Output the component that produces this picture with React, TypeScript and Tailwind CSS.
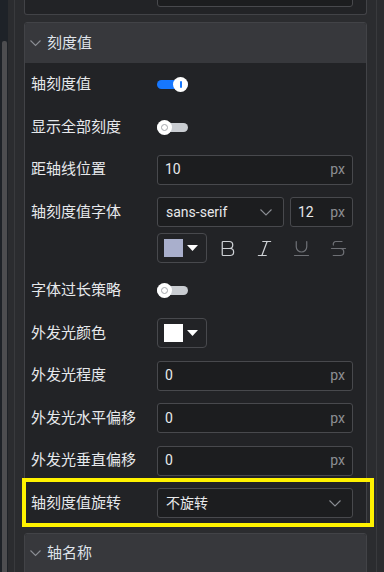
import React from "react";
import { Bold, Italic, Underline, Strikethrough } from "lucide-react";

function Chevron({ color = "#8b8e94" }: { color?: string }) {
  return (
    <svg width="12" height="7" viewBox="0 0 12 7" fill="none" className="shrink-0">
      <polyline points="0.5,0.5 6,6 11.5,0.5" stroke={color} strokeWidth="1.1" />
    </svg>
  );
}

function SectionHeader({ title }: { title: string }) {
  return (
    <div className="h-[40px] bg-[#37383c] rounded-t-[2px] flex items-center pl-[5px]">
      <svg width="11" height="7" viewBox="0 0 11 7" fill="none" className="shrink-0">
        <polyline points="0.5,0.5 5.5,5.5 10.5,0.5" stroke="#8b8e94" strokeWidth="1.1" />
      </svg>
      <span className="ml-[6px] text-[15px] text-[#dfe3ea] leading-none">{title}</span>
    </div>
  );
}

function Toggle({ on }: { on: boolean }) {
  return (
    <div className="relative w-[31px] h-[15px] flex items-center">
      <div className={on ? "w-full h-[9px] rounded-full bg-[#1677ff]" : "w-full h-[9px] rounded-full bg-[#c9ccd1]"} />
      <div
        className={
          on
            ? "absolute top-0 right-0 w-[15px] h-[15px] rounded-full bg-white flex items-center justify-center"
            : "absolute top-0 left-0 w-[15px] h-[15px] rounded-full bg-white flex items-center justify-center"
        }
      >
        {on ? (
          <div className="w-[2px] h-[7px] bg-[#1677ff] rounded-[1px]" />
        ) : (
          <div className="w-[7px] h-[7px] rounded-full border-[1.5px] border-[#a3a6ab]" />
        )}
      </div>
    </div>
  );
}

function NumInput({ value, wide = true, unit = true }: { value: string; wide?: boolean; unit?: boolean }) {
  return (
    <div
      className={
        (wide ? "w-[196px] " : "w-[63px] ") +
        "h-[30px] shrink-0 border border-[#48494d] rounded-[3px] bg-[#1c1d1f] flex items-center justify-between pl-[7px] pr-[7px] text-[14px]"
      }
    >
      <span className="text-[#e8e9eb]">{value}</span>
      {unit && <span className="text-[#8d8f93]">px</span>}
    </div>
  );
}

function Select({ value, width }: { value: string; width: string }) {
  return (
    <div
      className={
        width +
        " h-[30px] shrink-0 border border-[#48494d] rounded-[3px] bg-[#1c1d1f] flex items-center justify-between pl-[8px] pr-[11px]"
      }
    >
      <span className="text-[#e8e9eb] text-[14px]">{value}</span>
      <Chevron />
    </div>
  );
}

function ColorButton({ color }: { color: string }) {
  return (
    <div className="w-[50px] h-[30px] shrink-0 border border-[#48494d] rounded-[4px] flex items-center pl-[6px]">
      <div className="w-[19px] h-[18px]" style={{ background: color }} />
      <svg width="11" height="6" viewBox="0 0 11 6" className="ml-[4px]">
        <polygon points="0,0 11,0 5.5,6" fill="#ffffff" />
      </svg>
    </div>
  );
}

function Row({ label, children }: { label: string; children: React.ReactNode }) {
  return (
    <div className="flex items-center h-[30px]">
      <div className="w-[126px] shrink-0 text-[15px] text-[#e6e8eb] leading-none">{label}</div>
      {children}
    </div>
  );
}

export default function App() {
  return (
    <div className="w-[384px] h-[572px] overflow-hidden flex bg-[#2b2c2f] font-['Roboto','Noto_Sans_CJK_SC',sans-serif]">
      <div className="w-[8px] shrink-0 bg-[#1e2228] pt-[41px] pl-[2px]">
        <div className="w-[5px] h-full bg-[#4d4d50] rounded-t-[2px]" />
      </div>
      <div className="ml-[6px] w-[363px] shrink-0 border-x border-[#393a3d] px-[9px]">
        <div className="mt-[-30px] flex flex-col">
          {/* previous card bottom */}
          <div className="border-x border-b border-[#424347] rounded-b-[3px] bg-[#222326] pt-[7px] pb-[7px] pl-[6px] pr-[13px] flex justify-end">
            <NumInput value="" unit={false} />
          </div>

          {/* 刻度值 card */}
          <div className="mt-[7px] border border-[#424347] rounded-[3px] bg-[#222326]">
            <SectionHeader title="刻度值" />
            <div className="pt-[6.5px] pb-[7.5px] pl-[6px] pr-[13px] flex flex-col gap-[12.5px]">
              <Row label="轴刻度值">
                <Toggle on />
              </Row>
              <Row label="显示全部刻度">
                <Toggle on={false} />
              </Row>
              <Row label="距轴线位置">
                <NumInput value="10" />
              </Row>
              <div className="flex items-start">
                <div className="w-[126px] h-[30px] shrink-0 flex items-center text-[15px] text-[#e6e8eb] leading-none">
                  轴刻度值字体
                </div>
                <div className="flex flex-col gap-[6px]">
                  <div className="flex gap-[6px]">
                    <Select value="sans-serif" width="w-[127px]" />
                    <NumInput value="12" wide={false} />
                  </div>
                  <div className="flex items-center">
                    <ColorButton color="#a9afcc" />
                    <div className="ml-[2px] flex items-center">
                      <div className="w-[37px] flex justify-center text-[#cfd2d6]">
                        <Bold size={21} strokeWidth={1.4} />
                      </div>
                      <div className="w-[37px] flex justify-center text-[#cfd2d6]">
                        <Italic size={21} strokeWidth={1.4} />
                      </div>
                      <div className="w-[37px] flex justify-center text-[#6e7075]">
                        <Underline size={21} strokeWidth={1.4} />
                      </div>
                      <div className="w-[37px] flex justify-center text-[#6e7075]">
                        <Strikethrough size={21} strokeWidth={1.4} />
                      </div>
                    </div>
                  </div>
                </div>
              </div>
              <Row label="字体过长策略">
                <Toggle on={false} />
              </Row>
              <Row label="外发光颜色">
                <ColorButton color="#ffffff" />
              </Row>
              <Row label="外发光程度">
                <NumInput value="0" />
              </Row>
              <Row label="外发光水平偏移">
                <NumInput value="0" />
              </Row>
              <Row label="外发光垂直偏移">
                <NumInput value="0" />
              </Row>
              <div className="relative">
                <Row label="轴刻度值旋转">
                  <Select value="不旋转" width="w-[196px]" />
                </Row>
                <div className="absolute left-[-9px] right-[-21px] top-[-10.5px] bottom-[-8.5px] border-[4px] border-[#fff200] pointer-events-none" />
              </div>
            </div>
          </div>

          {/* 轴名称 card */}
          <div className="mt-[6px] border border-[#424347] rounded-[3px] bg-[#222326]">
            <SectionHeader title="轴名称" />
            <div className="h-[40px]" />
          </div>
        </div>
      </div>
    </div>
  );
}
